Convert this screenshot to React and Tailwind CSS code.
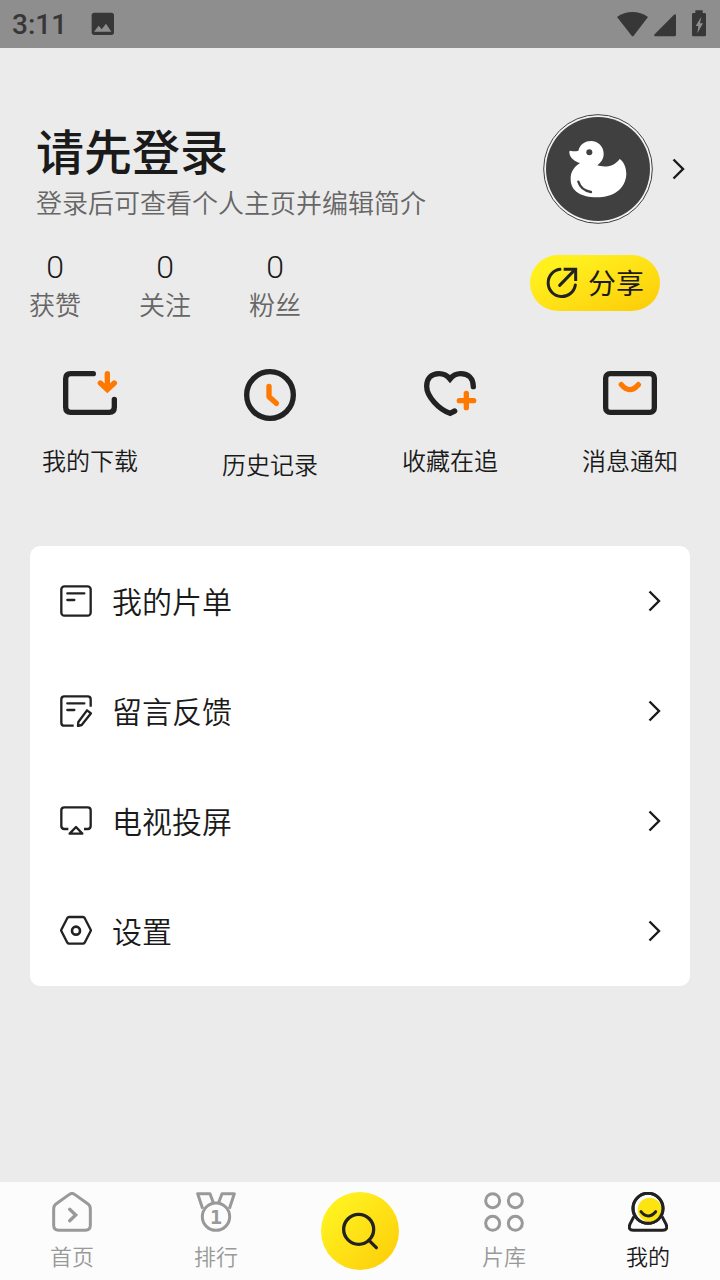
import React from 'react';

const Chevron = () => (
  <svg width="14" height="22" viewBox="0 0 14 22" fill="none" stroke="#1a1a1a" strokeWidth="2.4" aria-hidden="true">
    <path d="M1.5 1.5 L11 11 L1.5 20.5" />
  </svg>
);

const StatusBar = () => (
  <div className="flex h-12 items-center justify-between bg-[#8e8e8e] px-3 text-[#373737]">
    <div className="flex items-center gap-6">
      <span className="pt-0.5 font-[Roboto] text-[28px] leading-8 font-medium">3:11</span>
      <svg width="24" height="24" viewBox="274 36 72 72" aria-hidden="true">
        <rect x="276" y="38" width="67" height="67" rx="8" fill="currentColor" />
        <path d="M283 95 L297 77 L306 88 L319 71 L335 95 Z" fill="#8e8e8e" />
      </svg>
    </div>
    <svg width="92" height="30" viewBox="48 26 276 90" fill="currentColor" aria-hidden="true">
      <path d="M51 50 C78 30 117 30 144 50 L101 106 Q98 109 95 106 Z" />
      <path d="M222 43 Q228 40 228 46 V103 Q228 108 223 108 H166 Q160 107 164 102 Z" />
      <path d="M286 30 H308 V38 H314 Q318 38 318 42 V104 Q318 108 314 108 H280 Q276 108 276 104 V42 Q276 38 280 38 H286 Z" />
      <path d="M304 49 L287 77 H295 L292 99 L309 69 H300 Z" fill="#8e8e8e" />
    </svg>
  </div>
);

const Avatar = () => (
  <svg width="110" height="110" viewBox="69 42 330 330" aria-hidden="true">
    <circle cx="234" cy="207" r="163" fill="#f2f2f2" stroke="#404040" strokeWidth="3" />
    <circle cx="234" cy="207" r="156" fill="#404040" />
    <path
      fill="#fff"
      d="M151 152 Q163 156 175 152 C180 133 195 123 213 123 C235 123 251 140 251 162 C251 177 243 187 232 196 C250 202 280 203 299 177 C311 184 319 203 319 222 C317 267 280 292 230 292 C185 292 152 275 152 238 C151 215 163 200 180 189 C164 184 150 174 148 158 Q147 152 151 152 Z"
    />
    <circle cx="208" cy="157" r="9" fill="#404040" />
    <path d="M175 245 C180 262 195 273 213 276" fill="none" stroke="#404040" strokeWidth="7" strokeLinecap="round" />
  </svg>
);

const ShareIcon = () => (
  <svg width="32" height="32" viewBox="78 501 96 96" fill="none" stroke="#222" strokeWidth="9" aria-hidden="true">
    <path d="M120 508 A41 41 0 1 0 166 555" strokeLinecap="round" />
    <path d="M119 556 L165 509" strokeLinecap="round" />
    <path d="M131 508 H167 V543" />
  </svg>
);

const stats = [
  { label: '获赞', value: 0 },
  { label: '关注', value: 0 },
  { label: '粉丝', value: 0 }
];

const shortcuts = [
  {
    label: '我的下载',
    icon: (
      <svg width="60" height="48" viewBox="90 42 180 144" fill="none" strokeWidth="16" strokeLinecap="round" aria-hidden="true">
        <path d="M190 56 H122 Q107 56 107 71 V157 Q107 172 122 172 H238 Q253 172 253 157 V133" stroke="#222" />
        <path d="M232 56 V98 M211 84 L232 104 L253 84" stroke="#ff7800" />
        <path d="M220 88 H244 L232 102 Z" fill="#ff7800" />
      </svg>
    )
  },
  {
    label: '历史记录',
    icon: (
      <svg width="52" height="52" viewBox="642 42 156 156" fill="none" strokeWidth="16" aria-hidden="true">
        <circle cx="720" cy="120" r="70" stroke="#222" />
        <path d="M717 94 V125 L739 145" stroke="#ff7800" strokeLinecap="round" strokeLinejoin="round" />
      </svg>
    )
  },
  {
    label: '收藏在追',
    icon: (
      <svg width="60" height="48" viewBox="90 42 180 144" fill="none" strokeWidth="16" strokeLinecap="round" aria-hidden="true">
        <path
          d="M250 95 C250 70 235 56 212 56 C198 56 188 62 180 72 C172 62 162 56 147 56 C122 56 110 73 110 94 C110 125 147 164 180 175 L194 168"
          stroke="#222"
        />
        <path d="M229 115 V158 M208 137 H251" stroke="#ff7800" />
      </svg>
    )
  },
  {
    label: '消息通知',
    icon: (
      <svg width="60" height="48" viewBox="630 42 180 144" fill="none" strokeWidth="16" aria-hidden="true">
        <rect x="647" y="56" width="146" height="116" rx="13" stroke="#222" />
        <path d="M694 89 Q719 119 745 89" stroke="#ff7800" strokeLinecap="round" />
      </svg>
    )
  }
];

const menuItems = [
  {
    label: '我的片单',
    icon: (
      <svg width="32" height="32" viewBox="90 135 96 96" fill="none" stroke="#222" strokeWidth="7" aria-hidden="true">
        <rect x="94" y="139" width="88" height="88" rx="9" />
        <path d="M112 160 H163 M112 180 H133" strokeLinecap="round" />
      </svg>
    )
  },
  {
    label: '留言反馈',
    icon: (
      <svg width="32" height="32" viewBox="90 465 96 96" fill="none" stroke="#222" strokeWidth="7" aria-hidden="true">
        <path d="M182 500 V478 Q182 469 173 469 H103 Q94 469 94 478 V548 Q94 557 103 557 H131" />
        <path d="M112 490 H163 M112 510 H133" strokeLinecap="round" />
        <path d="M171 511 L183 520 L155 555 L144 558 L145 546 Z" strokeLinejoin="round" />
      </svg>
    )
  },
  {
    label: '电视投屏',
    icon: (
      <svg width="32" height="32" viewBox="90 75 96 96" fill="none" stroke="#222" strokeWidth="7" aria-hidden="true">
        <path d="M115 147 H103 Q94 147 94 138 V91 Q94 82 103 82 H173 Q182 82 182 91 V138 Q182 147 173 147 H162" />
        <path d="M138 141 L157 161 H119 Z" strokeLinejoin="round" />
      </svg>
    )
  },
  {
    label: '设置',
    icon: (
      <svg width="32" height="32" viewBox="90 405 96 96" fill="none" stroke="#222" strokeWidth="7" aria-hidden="true">
        <path d="M117 411 H159 Q162 411 164 414 L182 449 Q183 451 182 453 L164 488 Q162 491 159 491 H117 Q114 491 112 488 L94 453 Q93 451 94 449 L112 414 Q114 411 117 411 Z" />
        <circle cx="138" cy="452" r="12" strokeWidth="8" />
      </svg>
    )
  }
];

const HomeIcon = () => (
  <svg width="40" height="40" viewBox="156 66 120 120" fill="none" stroke="#999" strokeWidth="9" aria-hidden="true">
    <path d="M207 74 Q216 67 225 74 L263 101 Q271 107 271 117 V166 Q271 181 256 181 H176 Q161 181 161 166 V117 Q161 107 169 101 Z" />
    <path d="M209 118 L227 135 L209 152" strokeWidth="10" strokeLinecap="round" />
  </svg>
);

const MedalIcon = () => (
  <svg width="40" height="40" viewBox="588 66 120 120" fill="none" stroke="#999" strokeWidth="9" aria-hidden="true">
    <circle cx="648" cy="140" r="41" />
    <path d="M608 116 L593 71 H630 L640 98 M656 98 L666 71 H703 L688 116" strokeLinejoin="round" />
    <text x="648" y="161" textAnchor="middle" fill="#999" stroke="none" fontSize="60" fontWeight="700" fontFamily="DejaVu Sans Mono, monospace">1</text>
  </svg>
);

const LibraryIcon = () => (
  <svg width="40" height="40" viewBox="552 66 120 120" fill="none" stroke="#999" strokeWidth="9" aria-hidden="true">
    <circle cx="578" cy="92" r="21" />
    <circle cx="646" cy="92" r="21" />
    <circle cx="578" cy="160" r="21" />
    <circle cx="646" cy="160" r="21" />
  </svg>
);

const MineIcon = () => (
  <svg width="40" height="40" viewBox="984 66 120 120" fill="none" stroke="#222" strokeWidth="9" aria-hidden="true">
    <path d="M1002 139 L990 162 Q983 181 1000 181 H1088 Q1105 181 1098 162 L1086 139" />
    <circle cx="1044" cy="115" r="45" fill="#fcfcfc" />
    <circle cx="1049" cy="119" r="36" fill="#fde310" stroke="none" />
    <circle cx="1044" cy="115" r="45" />
    <path d="M1023 125 Q1044 151 1067 125" strokeLinecap="round" />
  </svg>
);

const SearchIcon = () => (
  <svg width="40" height="40" viewBox="120 123 120 120" fill="none" stroke="#222" strokeWidth="10" aria-hidden="true">
    <circle cx="176" cy="178" r="45" />
    <path d="M207 211 L229 233" strokeLinecap="round" />
  </svg>
);

const NavItem = ({ label, icon, active }) => (
  <a href="#" className="flex flex-col items-center gap-2" aria-current={active ? 'page' : undefined}>
    {icon}
    <span className={`text-[22px] leading-9 ${active ? 'text-[#1a1a1a]' : 'text-[#999]'}`}>{label}</span>
  </a>
);

const App = () => {
  return (
    <div className="flex min-h-screen flex-col bg-[#ebebeb] font-[Roboto,'Noto_Sans_CJK_SC',sans-serif] font-[350] text-[#1a1a1a]">
      <StatusBar />

      <main className="flex-1">
        <header className="flex items-start justify-between pt-16 pr-[34px] pl-9">
          <div className="pt-3">
            <h1 className="text-[48px] leading-[60px] font-medium">请先登录</h1>
            <p className="text-[26px] leading-10 text-[#666]">登录后可查看个人主页并编辑简介</p>
          </div>
          <button type="button" aria-label="个人主页" className="flex items-center gap-[19px] pt-0.5">
            <Avatar />
            <Chevron />
          </button>
        </header>

        <section className="flex items-start justify-between pt-6 pr-[60px]">
          <dl className="flex">
            {stats.map((stat) => (
              <div key={stat.label} className="flex w-[110px] flex-col-reverse items-center">
                <dt className="text-[26px] leading-10 text-[#666]">{stat.label}</dt>
                <dd className="text-[32px] leading-[38px]">{stat.value}</dd>
              </div>
            ))}
          </dl>
          <button
            type="button"
            className="mt-[7px] flex h-14 items-center gap-2.5 rounded-full bg-linear-to-br from-[#fff01e] from-20% to-[#fccb05] px-4 text-[28px] font-normal"
          >
            <ShareIcon />
            <span className="pt-1">分享</span>
          </button>
        </section>

        <section className="grid grid-cols-4 pt-[43px]">
          {shortcuts.map((item) => (
            <button key={item.label} type="button" className="flex flex-col items-center gap-[26px]">
              {item.icon}
              <span className="text-[24px] leading-[38px]">{item.label}</span>
            </button>
          ))}
        </section>

        <ul className="mx-[30px] mt-[61px] rounded-[10px] bg-white">
          {menuItems.map((item) => (
            <li key={item.label}>
              <a href="#" className="flex h-[110px] items-center gap-5 pr-7 pl-[30px]">
                {item.icon}
                <span className="flex-1 pt-1 text-[30px] leading-10">{item.label}</span>
                <Chevron />
              </a>
            </li>
          ))}
        </ul>
      </main>

      <nav className="sticky bottom-0 grid grid-cols-5 bg-[#fcfcfc] pt-2.5 pb-1">
        <NavItem label="首页" icon={<HomeIcon />} />
        <NavItem label="排行" icon={<MedalIcon />} />
        <a
          href="#"
          aria-label="搜索"
          className="flex size-[78px] items-center justify-center justify-self-center rounded-full bg-linear-to-br from-[#fff01e] from-20% to-[#fccb05]"
        >
          <SearchIcon />
        </a>
        <NavItem label="片库" icon={<LibraryIcon />} />
        <NavItem label="我的" icon={<MineIcon />} active />
      </nav>
    </div>
  );
};

export default App;
